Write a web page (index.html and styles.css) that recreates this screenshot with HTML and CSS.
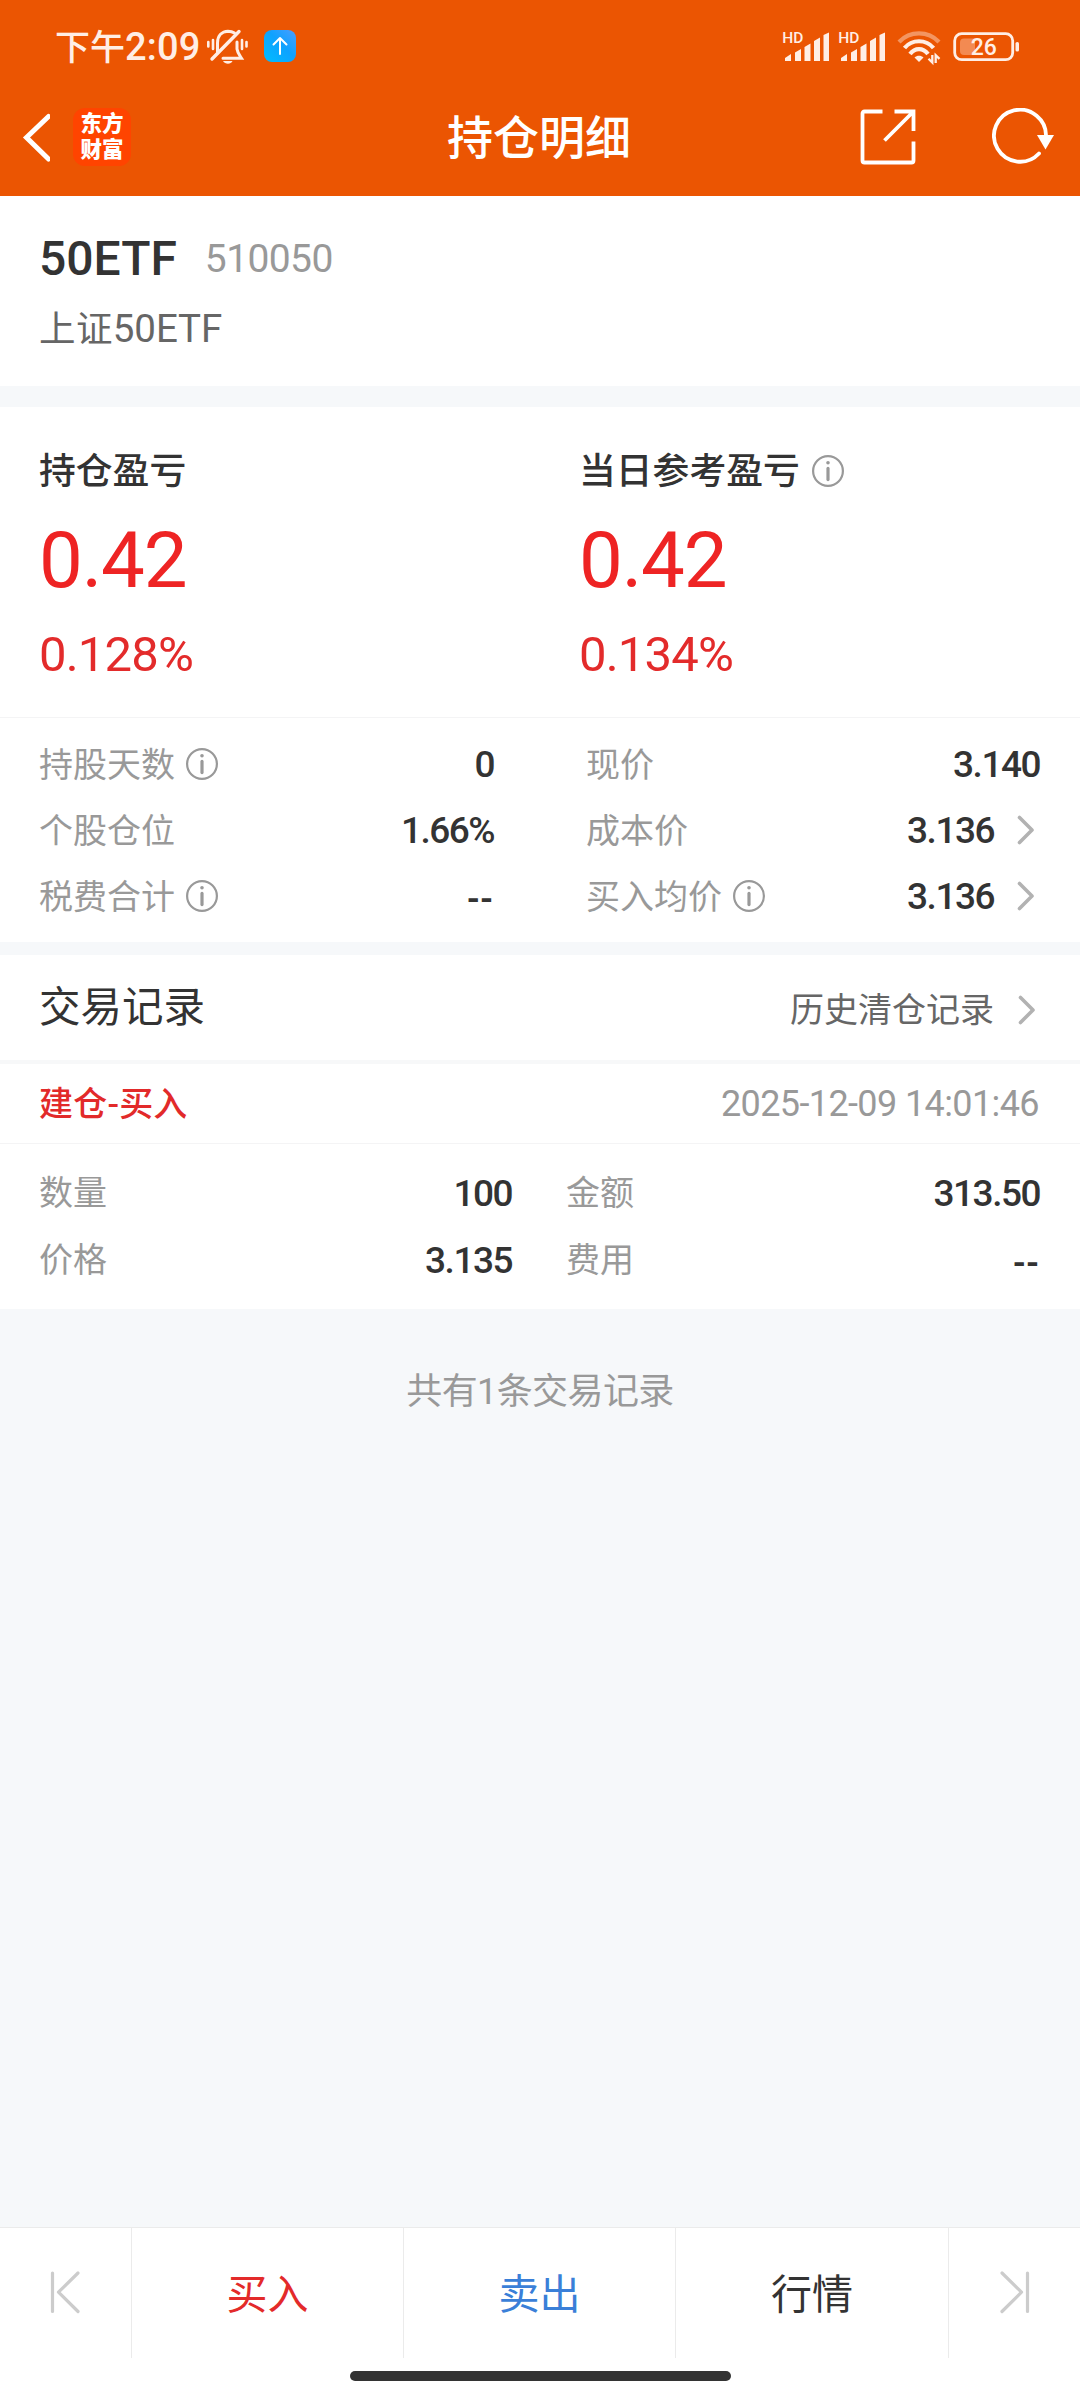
FILE: index.html
```html
<!DOCTYPE html>
<html lang="zh-CN">
<head>
<meta charset="utf-8">
<title>持仓明细</title>
<link rel="stylesheet" href="styles.css">
</head>
<body>
<svg class="defs" width="0" height="0">
  <symbol id="info" viewBox="0 0 32 32">
    <circle cx="16" cy="16" r="14.9" fill="none" stroke="#999" stroke-width="2.2"/>
    <circle cx="16" cy="7.8" r="1.8" fill="#999"/>
    <path d="M16 13.4V24.6" stroke="#999" stroke-width="3.2" stroke-linecap="round"/>
  </symbol>
  <symbol id="chevron" viewBox="0 0 18 30">
    <path d="M2.5 2.5L15 15L2.5 27.5" fill="none" stroke="#b2b2b2" stroke-width="3.6" stroke-linecap="round" stroke-linejoin="round"/>
  </symbol>
  <symbol id="bars" viewBox="0 0 48 36">
    <path d="M2 31V28L8 24V31ZM12 31V22.500L18 19V31ZM21.500 31V17L27.500 13.500V31ZM31 31V11L37 7.500V31ZM40.500 31V5L46 2.500V31Z" fill="#ffeee5"/>
  </symbol>
</svg>

<header class="top">
  <div class="status">
    <div class="time">下午<span class="clock">2:09</span></div>
    <svg class="bell" width="44" height="38" viewBox="0 0 44 38" fill="none" stroke="#ffeee5" stroke-linecap="round">
      <path d="M11.500 25V15C11.500 7.500 16 3.500 22 3.200C25 3.200 27 4 28.500 5M31 14V21C31.500 25 34 28 35.500 30.300H17" stroke-width="3"/>
      <path d="M6 31L33 3.500" stroke-width="3.400"/>
      <path d="M2.300 14V18.500M7 12V21M36 12V21M40.500 14V18.500" stroke-width="2.600"/>
      <path d="M17 33H26.500C25 36.500 19 36.500 17 33Z" fill="#ffeee5" stroke="none"/>
    </svg>
    <svg class="upload" width="32" height="32" viewBox="0 0 32 32">
      <defs><linearGradient id="sky" x1="0" y1="1" x2="1" y2="0"><stop offset="0" stop-color="#00bdff"/><stop offset=".55" stop-color="#0ea2ff"/><stop offset="1" stop-color="#4b9dff"/></linearGradient></defs>
      <rect width="32" height="32" rx="8" fill="url(#sky)"/>
      <path d="M16 24V8.500M9.500 14.500L16 8L22.500 14.500" fill="none" stroke="#fff" stroke-width="2" stroke-linecap="round" stroke-linejoin="round"/>
    </svg>
    <div class="status-right">
      <svg class="signal" width="48" height="36"><use href="#bars"/><text x="-.7" y="13" class="hd">HD</text></svg>
      <svg class="signal second" width="48" height="36"><use href="#bars"/><text x="-.7" y="13" class="hd">HD</text></svg>
      <svg class="wifi" width="44" height="36" viewBox="0 0 44 36" fill="none" stroke="#ffeee5" stroke-width="4.200">
        <path d="M2 12C13 .5 31 .5 42 12" opacity=".42"/>
        <path d="M7.500 18C15 9 29 9 36.500 18"/>
        <path d="M13 24C18 17.500 26 17.500 31 24"/>
        <path d="M22 32L17.500 27.500C20 25 24 25 26.500 27.500Z" fill="#ffeee5" stroke="none"/>
        <path d="M35.300 25V32.500L31.500 28.800M38.700 33V25.200L42.500 28.800" stroke-width="2.300"/>
      </svg>
      <svg class="battery" width="68" height="32" viewBox="0 0 68 32">
        <rect x="1.700" y="3.700" width="58" height="26" rx="7" fill="none" stroke="#ffeee5" stroke-width="2.800"/>
        <path d="M11 8.500H22V25H11Q7 25 7 21V12.500Q7 8.500 11 8.500Z" fill="#f38a52"/>
        <rect x="62.500" y="12" width="3.500" height="9.500" rx="1.600" fill="#ffeee5"/>
        <text x="30.800" y="24.500" class="charge">26</text>
      </svg>
    </div>
  </div>
  <nav class="nav">
    <div class="nav-left">
      <svg class="back" width="30" height="50" viewBox="0 0 30 50"><path d="M28.500 4.500L6.500 25.500L28.500 47" fill="none" stroke="#fff" stroke-width="5" stroke-linecap="round"/></svg>
      <div class="logo"><span>东方</span><span>财富</span></div>
    </div>
    <h1 class="title">持仓明细</h1>
    <div class="nav-right">
      <svg width="56" height="56" viewBox="0 0 56 56" fill="none" stroke="#fff" stroke-width="3.800">
        <path d="M22.500 2.500H4.500Q2.500 2.500 2.500 4.500V51.500Q2.500 53.500 4.500 53.500H51.500Q53.500 53.500 53.500 51.500V32.500M34.500 2.500H53.500V22M52 4L24.500 31.500"/>
      </svg>
      <svg class="refresh" width="64" height="58" viewBox="0 0 64 58">
        <path d="M47 45.500A26 26 0 1 1 54 29" fill="none" stroke="#fff" stroke-width="3.800" stroke-linecap="round"/>
        <path d="M45 27H62L53.500 41.500Z" fill="#fff"/>
      </svg>
    </div>
  </nav>
</header>

<section class="stock">
  <div class="stock-head"><span class="stock-name">50ETF</span><span class="stock-code">510050</span></div>
  <div class="stock-full"><span class="cjk">上证</span>50ETF</div>
</section>

<section class="position">
  <div class="profits">
    <div class="profit">
      <h2 class="profit-label">持仓盈亏</h2>
      <div class="profit-value">0.42</div>
      <div class="profit-rate">0.128%</div>
    </div>
    <div class="profit">
      <h2 class="profit-label">当日参考盈亏<svg class="info"><use href="#info"/></svg></h2>
      <div class="profit-value">0.42</div>
      <div class="profit-rate">0.134%</div>
    </div>
  </div>
  <div class="stats">
    <div class="row"><span class="label">持股天数</span><svg class="info"><use href="#info"/></svg><b class="value">0</b></div>
    <div class="row"><span class="label">现价</span><b class="value">3.140</b></div>
    <div class="row"><span class="label">个股仓位</span><b class="value">1.66%</b></div>
    <div class="row"><span class="label">成本价</span><b class="value">3.136</b><svg class="more"><use href="#chevron"/></svg></div>
    <div class="row"><span class="label">税费合计</span><svg class="info"><use href="#info"/></svg><b class="value dash">--</b></div>
    <div class="row"><span class="label">买入均价</span><svg class="info"><use href="#info"/></svg><b class="value">3.136</b><svg class="more"><use href="#chevron"/></svg></div>
  </div>
</section>

<section class="records">
  <div class="records-head">
    <h2 class="records-title">交易记录</h2>
    <a class="history">历史清仓记录<svg class="more"><use href="#chevron"/></svg></a>
  </div>
  <div class="trade-head"><span class="trade-type">建仓-买入</span><time class="trade-time">2025-12-09 14:01:46</time></div>
  <div class="trade">
    <div class="row"><span class="label">数量</span><b class="value">100</b></div>
    <div class="row"><span class="label">金额</span><b class="value">313.50</b></div>
    <div class="row"><span class="label">价格</span><b class="value">3.135</b></div>
    <div class="row"><span class="label">费用</span><b class="value dash">--</b></div>
  </div>
</section>
<p class="summary">共有1条交易记录</p>

<footer class="bottom">
  <div class="tabs">
    <div class="tab"><svg width="32" height="46" viewBox="0 0 32 46" fill="none" stroke="#ccc" stroke-width="3.200" stroke-linecap="round" stroke-linejoin="round"><path d="M2.500 4V42.500M28 4L8.500 23.200L28 42.500"/></svg></div>
    <div class="tab buy">买入</div>
    <div class="tab sell">卖出</div>
    <div class="tab">行情</div>
    <div class="tab"><svg width="32" height="46" viewBox="0 0 32 46" fill="none" stroke="#ccc" stroke-width="3.200" stroke-linecap="round" stroke-linejoin="round"><path d="M28.500 4V42.500M3 4L22.500 23.200L3 42.500"/></svg></div>
  </div>
  <div class="home"></div>
</footer>
</body>
</html>
```
FILE: styles.css
```css
* { box-sizing: border-box; }
body {
  margin: 0;
  width: 1080px;
  height: 2400px;
  display: flex;
  flex-direction: column;
  background: #f6f8fa;
  color: #333;
  font-family: Roboto, "Noto Sans CJK SC", sans-serif;
}
h1, h2, p { margin: 0; font-weight: 400; }
svg { display: block; flex: none; }
.defs { position: absolute; }

.top { height: 196px; background: #eb5502; color: #fff; }
.status { height: 78px; padding: 0 59px 0 55px; display: flex; align-items: flex-start; color: #ffeee5; }
.time { font-size: 35px; line-height: 40px; font-weight: 500; padding-top: 28px; width: 151px; white-space: nowrap; }
.clock { font-size: 38px; line-height: 1; letter-spacing: .2px; }
.bell { margin-top: 28px; }
.upload { margin: 30px 0 0 14px; }
.status-right { margin-left: auto; display: flex; padding-top: 30px; }
.signal { overflow: visible; }
.second { margin-left: 8px; }
.wifi { margin-left: 10px; }
.battery { margin-left: 12px; }
.hd { font: 500 15.5px Roboto, sans-serif; fill: #ffeee5; }
.charge { font: 500 23px Roboto, sans-serif; fill: #ffeee5; text-anchor: middle; }

.nav { height: 118px; display: grid; grid-template-columns: 1fr auto 1fr; align-items: center; padding: 0 22px 0 20px; }
.nav-left, .nav-right { display: flex; align-items: center; }
.nav-right { justify-content: flex-end; gap: 76px; margin-right: 2px; }
.logo {
  width: 58px; height: 58px; margin-left: 23px; border-radius: 12px; background: #ff4400;
  display: flex; flex-direction: column; align-items: center; justify-content: center;
  font-size: 21.5px; font-weight: 900; line-height: 26px;
}
.title { font-size: 46px; line-height: 60px; font-weight: 500; padding-top: 1px; }

.stock { height: 190px; padding: 32px 39px 0; background: #fff; }
.stock-head { display: flex; align-items: center; height: 60px; }
.stock-name { font-size: 48px; font-weight: 500; }
.stock-code { font-size: 39px; letter-spacing: -.6px; color: #999; margin-left: 28px; padding-top: 1px; }
.stock-full { margin-top: 21px; font-size: 38.5px; line-height: 40px; letter-spacing: -.1px; color: #666; }
.cjk { font-size: 36.5px; letter-spacing: .4px; }

.position { margin-top: 21px; height: 535px; background: #fff; }
.profits { display: grid; grid-template-columns: 1fr 1fr; height: 311px; border-bottom: 1px solid #f4f4f5; }
.profit { padding: 39px 39px 0; }
.profit-label { height: 50px; display: flex; align-items: center; gap: 12px; font-size: 36.800px; line-height: 50px; font-weight: 500; padding-top: 2px; }
.profit-label .info { margin-top: -2px; }
.profit-value { margin-top: 13px; font-size: 78px; line-height: 100px; letter-spacing: -1.200px; color: #ee2424; padding-top: 2px; }
.profit-rate { margin-top: 14px; font-size: 49px; line-height: 60px; letter-spacing: -.8px; color: #e32b2b; }
.info { width: 32px; height: 32px; }
.more { width: 18px; height: 30px; }

.stats { display: grid; grid-template-columns: 493px 453px; column-gap: 93px; grid-auto-rows: 66px; padding: 13px 0 0; }
.stats .row:nth-child(odd) { padding-left: 39px; }
.row { display: flex; align-items: center; }
.label { font-size: 34px; line-height: 40px; color: #999; padding-top: 1px; }
.row .info { margin-left: 11px; }
.value { margin-left: auto; font-size: 37px; line-height: 40px; font-weight: 500; letter-spacing: -1.500px; margin-right: -1px; padding-top: 2px; }
.dash { font-family: "Open Sans", sans-serif; font-weight: 600; letter-spacing: 1.500px; margin-right: -1px; padding-top: 0; }
.stats .more { margin: 0 4px 0 24px; }

.records { margin-top: 13px; background: #fff; height: 354px; }
.records-head { height: 109px; border-bottom: 4px solid #f7f8f9; padding: 0 44px 0 39px; display: flex; justify-content: space-between; align-items: center; }
.records-title { font-size: 41.500px; line-height: 50px; padding-top: 1px; }
.history { display: flex; align-items: center; gap: 24px; font-size: 34px; line-height: 40px; color: #666; padding-top: 5px; }
.trade-head { height: 80px; border-bottom: 1px solid #f4f4f5; padding: 0 41px 0 39px; display: flex; justify-content: space-between; align-items: center; line-height: 40px; }
.trade-type { font-size: 34px; font-weight: 500; color: #e22a2a; letter-spacing: .2px; }
.trade-time { font-size: 36px; letter-spacing: -.6px; color: #999; }
.trade { display: grid; grid-template-columns: 472px 473px; column-gap: 55px; grid-auto-rows: 67px; padding: 15px 0 0 39px; }

.summary { margin-top: 60px; font-size: 36px; line-height: 44px; letter-spacing: -.6px; text-align: center; color: #999; padding-top: 1px; }

.bottom { margin-top: auto; height: 173px; background: #fff; border-top: 1px solid #ebebeb; }
.tabs { height: 130px; display: grid; grid-template-columns: 132px 272px 272px 273px 131px; }
.tab { display: flex; align-items: center; justify-content: center; border-right: 1px solid #ebebeb; font-size: 41px; padding-bottom: 4px; }
.tab:last-child { border-right: 0; }
.tab svg { margin-top: 2px; }
.buy { color: #e32a2a; }
.sell { color: #3a7fd8; }
.home { width: 381px; height: 10px; margin: 13px auto 0; border-radius: 5px; background: #333; }
```
